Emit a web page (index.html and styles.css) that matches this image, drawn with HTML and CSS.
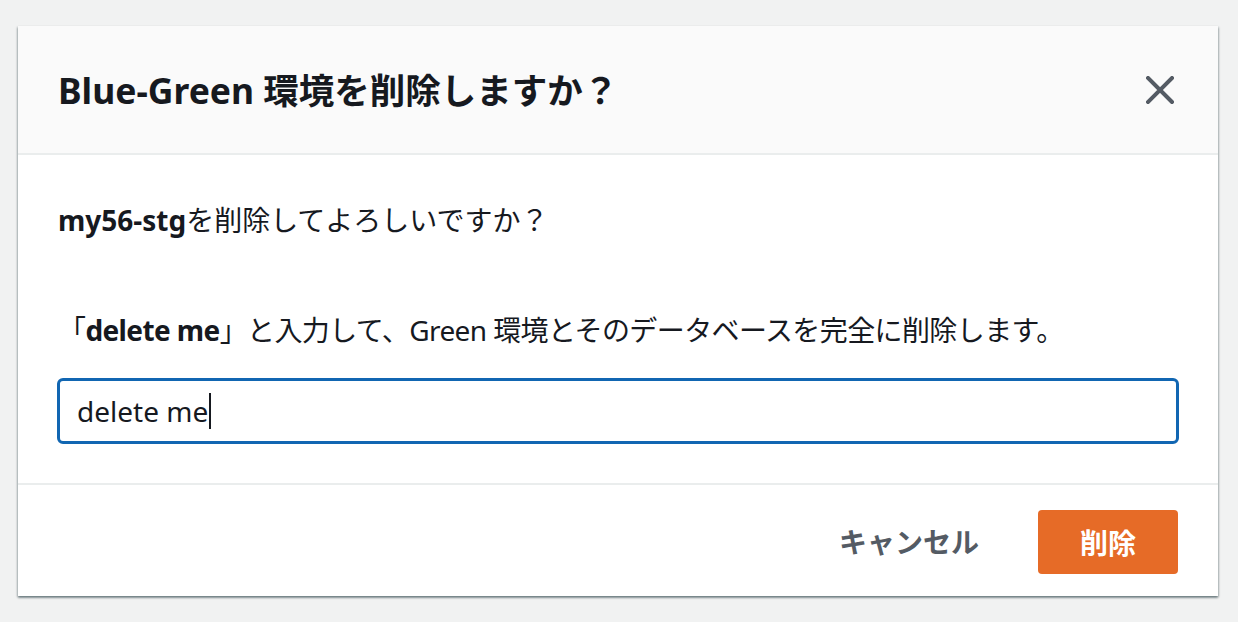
FILE: index.html
```html
<!DOCTYPE html>
<html lang="ja">
<head>
<meta charset="utf-8">
<title>Blue-Green 環境を削除しますか？</title>
<link rel="stylesheet" href="styles.css">
</head>
<body>
<div class="modal" role="dialog" aria-labelledby="modal-title">
  <div class="modal-header">
    <h2 class="modal-title" id="modal-title">Blue-Green 環境を削除しますか？</h2>
    <button class="close-btn" aria-label="閉じる">
      <svg width="28" height="28" viewBox="0 0 28 28" aria-hidden="true">
        <path d="M2 2 L26 26 M26 2 L2 26" stroke="#545b64" stroke-width="4" stroke-linecap="square" fill="none"/>
      </svg>
    </button>
  </div>
  <div class="modal-body">
    <p class="line-first"><strong>my56-stg</strong>を削除してよろしいですか？</p>
    <p class="line-second">「<strong>delete me</strong>」と入力して、Green 環境とそのデータベースを完全に削除します。</p>
    <div class="text-input" role="textbox">delete me<span class="caret"></span></div>
  </div>
  <div class="modal-footer">
    <button class="btn-cancel">キャンセル</button>
    <button class="btn-delete">削除</button>
  </div>
</div>
</body>
</html>
```

FILE: styles.css
```css
html, body {
  margin: 0;
  padding: 0;
}

body {
  background: #f1f2f2;
  font-family: "Noto Sans", "Noto Sans CJK JP", sans-serif;
  color: #16191f;
  width: 1238px;
  height: 622px;
  overflow: hidden;
}

.modal {
  margin: 26px 0 0 18px;
  width: 1200px;
  background: #ffffff;
  box-shadow: 0 2px 2px 0 rgba(0, 28, 36, 0.35), 1px 1px 2px 0 rgba(0, 28, 36, 0.2), -1px 1px 2px 0 rgba(0, 28, 36, 0.2);
}

.modal-header {
  height: 129px;
  box-sizing: border-box;
  background: #fafafa;
  border-bottom: 2px solid #eaeded;
  display: flex;
  align-items: center;
  justify-content: space-between;
  padding: 0 44px 0 40px;
}

.modal-title {
  margin: 0;
  font-size: 35.5px;
  font-weight: 700;
  line-height: 44px;
  color: #16191f;
}

.close-btn {
  background: none;
  border: none;
  padding: 0;
  width: 28px;
  height: 28px;
  display: flex;
  cursor: pointer;
}

.modal-body {
  padding: 45px 39px 39px 39px;
}

.modal-body p {
  margin: 0;
  font-size: 28px;
  line-height: 40px;
}

.line-first {
  padding-left: 1px;
}

.modal-body strong {
  font-weight: 700;
}

.line-second {
  margin-top: 70px !important;
  padding-left: 1px;
  letter-spacing: -0.6px;
}

.text-input {
  margin-top: 28px;
  height: 66px;
  box-sizing: border-box;
  border: 3px solid #1166b2;
  border-radius: 6px;
  padding: 0 17px;
  display: flex;
  align-items: center;
  font-size: 28px;
  color: #16191f;
}

.caret {
  display: inline-block;
  width: 2px;
  height: 36px;
  background: #16191f;
  margin-left: 1px;
}

.modal-footer {
  border-top: 2px solid #eaeded;
  height: 113px;
  box-sizing: border-box;
  display: flex;
  justify-content: flex-end;
  align-items: center;
  gap: 19px;
  padding: 0 40px;
}

.btn-cancel {
  background: none;
  border: none;
  font-family: inherit;
  font-size: 28px;
  font-weight: 700;
  color: #545b64;
  padding: 0 40px;
  height: 64px;
}

.btn-delete {
  background: #e66b27;
  border: none;
  border-radius: 4px;
  font-family: inherit;
  font-size: 28px;
  font-weight: 700;
  color: #ffffff;
  height: 64px;
  padding: 0 42px;
  margin-top: 2px;
}
```
